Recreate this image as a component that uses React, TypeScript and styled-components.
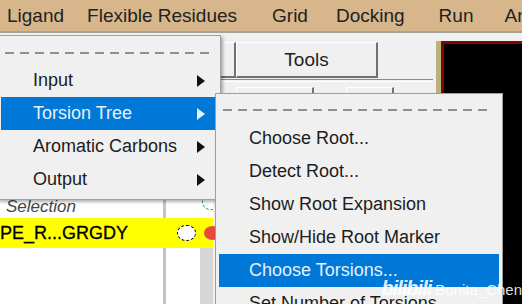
import React from 'react';
import styled, { createGlobalStyle } from 'styled-components';

const Global = createGlobalStyle`
  html, body {
    margin: 0;
    padding: 0;
    overflow: hidden;
    background: #f0f0f0;
  }
  body {
    font-family: "Liberation Sans", Arial, sans-serif;
  }
`;

const Screen = styled.div`
  position: relative;
  width: 522px;
  height: 304px;
  overflow: hidden;
  display: flex;
  flex-direction: column;
`;

const MenuBar = styled.div`
  height: 31px;
  flex-shrink: 0;
  background: #d8b68c;
  border-bottom: 2px solid #a8a399;
  display: flex;
  align-items: center;
  font-size: 19px;
  color: #222;
  white-space: nowrap;
  overflow: hidden;
`;

const BarItem = styled.span<{ $left: number }>`
  margin-left: ${({ $left }) => $left}px;
  flex-shrink: 0;
`;

const Workspace = styled.div`
  flex: 1;
  display: flex;
  background: #f0f0f0;
  min-height: 0;
`;

const LeftPane = styled.div`
  width: 213px;
  flex-shrink: 0;
  display: flex;
  flex-direction: column;
`;

const TopArea = styled.div`
  height: 165px;
  flex-shrink: 0;
`;

const Columns = styled.div`
  display: grid;
  grid-template-columns: 163px 3px 34px 13px;
`;

const HeaderRow = styled(Columns)`
  height: 20px;
  background: #fff;
`;

const Cell = styled.div<{ $bg?: string }>`
  background: ${({ $bg }) => $bg || '#fff'};
  overflow: hidden;
  position: relative;
`;

const HeaderName = styled(Cell)`
  font-style: italic;
  font-size: 17px;
  color: #444;
  line-height: 17px;
  padding-left: 6px;
`;

const GreenArc = styled.div`
  position: absolute;
  left: 2px;
  top: -4px;
  width: 16px;
  height: 14px;
  border: 1px dashed #2a9a3a;
  border-radius: 50%;
`;

const SelectedRow = styled.div`
  height: 30px;
  flex-shrink: 0;
  background: #ffff00;
  display: flex;
  align-items: center;
  font-size: 18px;
  color: #000;
  white-space: nowrap;
`;

const RowName = styled.span`
  width: 177px;
  flex-shrink: 0;
  -webkit-text-stroke: 0.3px #000;
`;

const Dot = styled.span<{ $fill: string; $dashed?: boolean }>`
  width: 17px;
  height: 14px;
  border-radius: 50%;
  background: ${({ $fill }) => $fill};
  border: ${({ $dashed }) => ($dashed ? '1px dashed #000' : 'none')};
  margin-right: 8px;
  flex-shrink: 0;
`;

const ListBody = styled(Columns)`
  flex: 1;
`;

const MiddlePane = styled.div`
  width: 223px;
  flex-shrink: 0;
  padding-top: 9px;
  display: flex;
  flex-direction: column;
`;

const ButtonRow = styled.div`
  display: flex;
  height: 36px;
`;

const Button = styled.div<{ $width: number; $offset?: number }>`
  width: ${({ $width }) => $width}px;
  margin-left: ${({ $offset }) => $offset || 0}px;
  box-sizing: border-box;
  border-top: 1px solid #fff;
  border-left: 1px solid #fff;
  border-right: 2px solid #707070;
  border-bottom: 2px solid #707070;
  background: #f0f0f0;
  font-size: 19px;
  color: #222;
  display: flex;
  align-items: center;
  justify-content: center;
`;

const Separator = styled.div`
  margin-top: 1px;
  width: 220px;
  height: 1px;
  border-top: 1px solid #8a8a8a;
  border-bottom: 1px solid #fff;
`;

const SecondRow = styled(ButtonRow)`
  margin-top: 5px;
`;

const OliveStrip = styled.div`
  width: 5px;
  flex-shrink: 0;
  margin-top: 8px;
  background: #b9b27a;
`;

const Viewer = styled.div`
  flex: 1;
  margin-top: 8px;
  background: #000;
  border-top: 3px solid #7d0606;
  border-left: 3px solid #7d0606;
`;

const Menu = styled.div<{ $left: number; $top: number; $width: number; $height: number }>`
  position: absolute;
  left: ${({ $left }) => $left}px;
  top: ${({ $top }) => $top}px;
  width: ${({ $width }) => $width}px;
  height: ${({ $height }) => $height}px;
  box-sizing: border-box;
  padding: 3px;
  background: #f0f0f0;
  border: 1px solid #a0a0a0;
  box-shadow: 2px 2px 3px rgba(0, 0, 0, 0.3);
`;

const TearOff = styled.div<{ $top: number; $bottom: number }>`
  height: 2px;
  margin: ${({ $top, $bottom }) => `${$top}px 6px ${$bottom}px 4px`};
  background: repeating-linear-gradient(90deg, #8f8f8f 0 9px, transparent 9px 15px);
`;

const Item = styled.div<{ $active?: boolean; $indent: number }>`
  height: 33px;
  display: flex;
  align-items: center;
  justify-content: space-between;
  padding-left: ${({ $indent }) => $indent}px;
  padding-right: 12px;
  font-size: 18px;
  white-space: nowrap;
  background: ${({ $active }) => ($active ? '#0078d7' : 'transparent')};
  color: ${({ $active }) => ($active ? '#e5f1fb' : '#1c1c1c')};
`;

const Arrow = styled.span<{ $active?: boolean }>`
  width: 0;
  height: 0;
  border-top: 6px solid transparent;
  border-bottom: 6px solid transparent;
  border-left: 8px solid ${({ $active }) => ($active ? '#e5f1fb' : '#111')};
`;

const Watermark = styled.div`
  position: absolute;
  right: 0;
  bottom: 4px;
  display: flex;
  align-items: baseline;
  gap: 4px;
  color: rgba(255, 255, 255, 0.88);
  white-space: nowrap;
`;

const Logo = styled.span`
  font-size: 20px;
  font-weight: bold;
  font-style: italic;
  letter-spacing: -1px;
`;

const Credit = styled.span`
  font-size: 15px;
`;

const menuBar = [
  { label: 'Ligand', left: 7 },
  { label: 'Flexible Residues', left: 23 },
  { label: 'Grid', left: 35 },
  { label: 'Docking', left: 28 },
  { label: 'Run', left: 34 },
  { label: 'Analyze', left: 31 },
];

const ligandMenu = [
  { label: 'Input' },
  { label: 'Torsion Tree', active: true },
  { label: 'Aromatic Carbons' },
  { label: 'Output' },
];

const torsionMenu = [
  { label: 'Choose Root...' },
  { label: 'Detect Root...' },
  { label: 'Show Root Expansion' },
  { label: 'Show/Hide Root Marker' },
  { label: 'Choose Torsions...', active: true },
  { label: 'Set Number of Torsions...' },
];

const App: React.FC = () => {
  return (
    <Screen>
      <Global />
      <MenuBar>
        {menuBar.map((m) => (
          <BarItem key={m.label} $left={m.left}>{m.label}</BarItem>
        ))}
      </MenuBar>
      <Workspace>
        <LeftPane>
          <TopArea />
          <HeaderRow>
            <HeaderName>Selection</HeaderName>
            <Cell $bg="#c4c4c4" />
            <Cell />
            <Cell>
              <GreenArc />
            </Cell>
          </HeaderRow>
          <SelectedRow>
            <RowName>PE_R...GRGDY</RowName>
            <Dot $fill="#fff" $dashed />
            <Dot $fill="#e84a3c" />
          </SelectedRow>
          <ListBody>
            <Cell />
            <Cell $bg="#c4c4c4" />
            <Cell />
            <Cell $bg="#d6d6d6" />
          </ListBody>
        </LeftPane>
        <MiddlePane>
          <ButtonRow>
            <Button $width={23} />
            <Button $width={142}>Tools</Button>
          </ButtonRow>
          <Separator />
          <SecondRow>
            <Button $width={78} $offset={23} />
            <Button $width={48} $offset={32} />
          </SecondRow>
        </MiddlePane>
        <OliveStrip />
        <Viewer />
      </Workspace>

      <Menu $left={-3} $top={35} $width={224} $height={165}>
        <TearOff $top={13} $bottom={10} />
        {ligandMenu.map((it) => (
          <Item key={it.label} $active={it.active} $indent={32}>
            {it.label}
            <Arrow $active={it.active} />
          </Item>
        ))}
      </Menu>

      <Menu $left={215} $top={93} $width={288} $height={240}>
        <TearOff $top={12} $bottom={11} />
        {torsionMenu.map((it) => (
          <Item key={it.label} $active={it.active} $indent={30}>
            {it.label}
          </Item>
        ))}
      </Menu>

      <Watermark>
        <Logo>bilibili</Logo>
        <Credit>Bonita_Chen</Credit>
      </Watermark>
    </Screen>
  );
};

export default App;
